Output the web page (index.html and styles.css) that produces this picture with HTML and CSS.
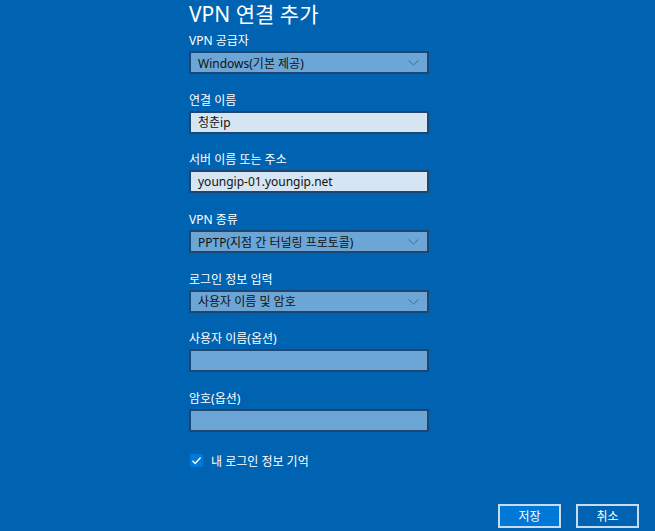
FILE: index.html
```html
<!DOCTYPE html>
<html lang="ko">
<head>
    <meta charset="UTF-8">
    <meta name="viewport" content="width=device-width, initial-scale=1.0">
    <title>VPN 연결 추가</title>
    <link rel="stylesheet" href="styles.css">
</head>
<body>

    <!-- Form column -->
    <div class="panel">
        <h1 class="title">VPN 연결 추가</h1>

        <div class="field">
            <div class="label">VPN 공급자</div>
            <div class="select">
                <span>Windows(기본 제공)</span>
                <svg class="chevron" width="11" height="6" viewBox="0 0 11 6"><path d="M0.5 0.5 L5.5 5 L10.5 0.5" fill="none" stroke="#3b6e9e" stroke-width="1"/></svg>
            </div>
        </div>

        <div class="field">
            <div class="label">연결 이름</div>
            <div class="input">청춘ip</div>
        </div>

        <div class="field">
            <div class="label">서버 이름 또는 주소</div>
            <div class="input">youngip-01.youngip.net</div>
        </div>

        <div class="field">
            <div class="label">VPN 종류</div>
            <div class="select">
                <span>PPTP(지점 간 터널링 프로토콜)</span>
                <svg class="chevron" width="11" height="6" viewBox="0 0 11 6"><path d="M0.5 0.5 L5.5 5 L10.5 0.5" fill="none" stroke="#3b6e9e" stroke-width="1"/></svg>
            </div>
        </div>

        <div class="field">
            <div class="label">로그인 정보 입력</div>
            <div class="select">
                <span>사용자 이름 및 암호</span>
                <svg class="chevron" width="11" height="6" viewBox="0 0 11 6"><path d="M0.5 0.5 L5.5 5 L10.5 0.5" fill="none" stroke="#3b6e9e" stroke-width="1"/></svg>
            </div>
        </div>

        <div class="field">
            <div class="label">사용자 이름(옵션)</div>
            <div class="select empty"></div>
        </div>

        <div class="field">
            <div class="label">암호(옵션)</div>
            <div class="select empty"></div>
        </div>

        <div class="remember">
            <span class="checkbox">
                <svg width="13" height="13" viewBox="0 0 13 13"><path d="M2.5 6.8 L5.2 9.4 L10.6 3.6" fill="none" stroke="#ffffff" stroke-width="1.4"/></svg>
            </span>
            <span>내 로그인 정보 기억</span>
        </div>
    </div>

    <!-- Buttons -->
    <div class="actions">
        <button class="btn primary">저장</button>
        <button class="btn">취소</button>
    </div>

</body>
</html>
```

FILE: styles.css
```css
* {
    margin: 0;
    padding: 0;
    box-sizing: border-box;
}

body {
    font-family: 'Noto Sans', 'Noto Sans CJK KR', sans-serif;
    width: 655px;
    height: 531px;
    overflow: hidden;
    background-color: #0063b1;
    color: #ffffff;
    font-size: 12px;
}

/* Form column */
.panel {
    width: 240px;
    margin-left: 189px;
    display: flex;
    flex-direction: column;
}

.title {
    font-size: 21px;
    font-weight: normal;
    line-height: 28px;
    height: 31px;
}

.field {
    display: flex;
    flex-direction: column;
    gap: 2px;
    margin-bottom: 16.7px;
}

.label {
    line-height: 16px;
    height: 18px;
    padding-top: 2px;
}

.select,
.input {
    height: 23px;
    border: 2px solid #1d4673;
    display: flex;
    align-items: center;
    justify-content: space-between;
    padding: 0 8px 0 7px;
    color: #111111;
}

.select {
    background-color: #6ca6d6;
}

.input {
    background-color: #d5e5f3;
}

.chevron {
    margin-top: 1px;
}

/* Remember checkbox */
.remember {
    display: flex;
    align-items: center;
    gap: 8px;
    margin-top: 4px;
    margin-left: 1px;
    height: 16px;
}

.checkbox {
    width: 13px;
    height: 13px;
    background-color: #0078d7;
    display: flex;
}

/* Buttons */
.actions {
    display: flex;
    justify-content: flex-end;
    gap: 15px;
    padding-right: 16px;
    margin-top: 35px;
}

.btn {
    width: 63px;
    height: 24px;
    font-family: 'Noto Sans CJK KR', sans-serif;
    font-size: 12px;
    color: #ffffff;
    background-color: #0063b1;
    border: 2px solid #c7dcef;
}

.btn.primary {
    background-color: #0078d7;
}
```
